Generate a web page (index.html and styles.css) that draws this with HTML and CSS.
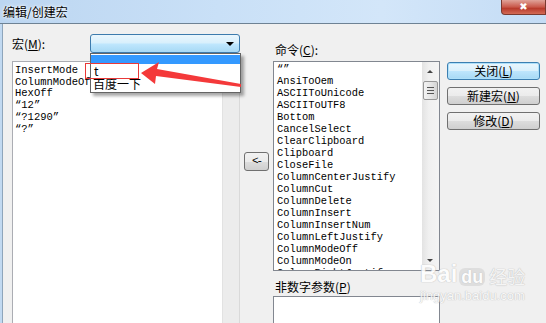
FILE: index.html
```html
<!DOCTYPE html>
<html lang="zh-CN">
<head>
	<meta charset="UTF-8">
	<title>编辑/创建宏</title>
	<link rel="stylesheet" href="styles.css">
</head>
<body>
<div class="titlebar">
	<span class="title">编辑/创建宏</span>
	<span class="close-btn">&#10006;</span>
</div>
<div class="dialog">
	<div class="col-left">
		<div class="macro-row">
			<span class="label">宏(<u>M</u>):</span>
			<div class="combo"><span class="combo-arrow"></span></div>
		</div>
		<div class="edit-box">
			<div class="edit-text">
				<div>InsertMode</div>
				<div>ColumnModeOff</div>
				<div>HexOff</div>
				<div>“12”</div>
				<div>“?1290”</div>
				<div>“?”</div>
			</div>
			<div class="edit-scroll"></div>
		</div>
	</div>
	<div class="col-mid">
		<div class="arrow-btn">&lt;-</div>
	</div>
	<div class="col-right">
		<div class="label">命令(<u>C</u>):</div>
		<div class="list-box">
			<ul class="cmd-list">
				<li>“”</li>
				<li>AnsiToOem</li>
				<li>ASCIIToUnicode</li>
				<li>ASCIIToUTF8</li>
				<li>Bottom</li>
				<li>CancelSelect</li>
				<li>ClearClipboard</li>
				<li>Clipboard</li>
				<li>CloseFile</li>
				<li>ColumnCenterJustify</li>
				<li>ColumnCut</li>
				<li>ColumnDelete</li>
				<li>ColumnInsert</li>
				<li>ColumnInsertNum</li>
				<li>ColumnLeftJustify</li>
				<li>ColumnModeOff</li>
				<li>ColumnModeOn</li>
				<li class="cut">ColumnRightJustify</li>
			</ul>
			<div class="vscroll">
				<span class="sb-up"></span>
				<span class="sb-thumb"></span>
				<span class="sb-down"></span>
			</div>
		</div>
		<div class="label label-param">非数字参数(<u>P</u>)</div>
		<div class="param-box"></div>
	</div>
	<div class="col-btns">
		<div class="btn btn-default">关闭(<u>L</u>)</div>
		<div class="btn">新建宏(<u>N</u>)</div>
		<div class="btn">修改(<u>D</u>)</div>
	</div>
</div>

<!-- 下拉列表 -->
<div class="dropdown">
	<div class="dd-item dd-sel"></div>
	<div class="dd-item">t</div>
	<div class="dd-item dd-cn">百度一下</div>
</div>

<!-- 标注 -->
<div class="mark-box"></div>
<svg class="mark-arrow" width="546" height="323" viewBox="0 0 546 323">
	<polygon points="141,73 159,62 157,69 241,84 241,87 156,76 155,84" fill="#f4393a"/>
</svg>

<!-- 水印 -->
<div class="watermark">
	<div class="wm-top"><span class="wm-bai">Bai</span><span class="wm-du">du</span><span class="wm-jy">经验</span></div>
	<div class="wm-url">jingyan.baidu.com</div>
</div>
</body>
</html>
```

FILE: styles.css
```css
body{
	margin: 0;
	width: 546px;
	height: 323px;
	overflow: hidden;
	position: relative;
	background: #f0f0f0;
	font-family: "Noto Sans CJK SC", "DejaVu Sans", sans-serif;
	font-size: 12px;
	color: #000;
}
ul,li{
	margin: 0;
	padding: 0;
	list-style: none;
}
u{
	text-decoration: underline;
}

.titlebar{
	height: 23px;
	background: linear-gradient(to right, #bcd6f1, #c9e0f7 40%, #d3e6f9 70%, #c4dcf5);
	border-bottom: 1px solid #6e8294;
	position: relative;
}
.title{
	display: block;
	padding-left: 3px;
	line-height: 23px;
	font-size: 12px;
	text-shadow: 0 0 4px #fff, 0 0 2px #fff;
}
.close-btn{
	position: absolute;
	right: 0;
	top: 0;
	width: 43px;
	height: 14px;
	border: 1px solid #7a3a30;
	border-top: none;
	border-radius: 0 0 0 4px;
	background: linear-gradient(#e0a399, #c9584a 50%, #b83b2c 60%, #d36a55);
	color: #fff;
	font-size: 10px;
	line-height: 13px;
	text-align: center;
	font-family: "DejaVu Sans", sans-serif;
}

.dialog{
	display: flex;
	height: 299px;
	padding-left: 12px;
	border-left: 2px solid #c1d9f1;
	box-sizing: border-box;
	box-shadow: inset 1px 0 0 #8ea5bb;
}
.col-left{
	width: 228px;
	margin-left: -2px;
	padding-top: 10px;
	display: flex;
	flex-direction: column;
}
.macro-row{
	display: flex;
	align-items: center;
	height: 19px;
}
.macro-row .label{
	width: 78px;
}
.label{
	font-size: 12px;
	line-height: 12px;
}
.combo{
	width: 149px;
	height: 17px;
	border: 1px solid #3d7bad;
	border-radius: 3px;
	background: linear-gradient(#eaf6fd, #d9f0fc 45%, #bee6fd 55%, #a7d9f5);
	position: relative;
}
.combo-arrow{
	position: absolute;
	right: 5px;
	top: 7px;
	border-left: 4px solid transparent;
	border-right: 4px solid transparent;
	border-top: 4px solid #000;
}
.edit-box{
	margin-top: 8px;
	flex: 1;
	display: flex;
	border: 1px solid #abadb3;
	border-right: 1px solid #d9d9d9;
	border-bottom: none;
	background: #fff;
}
.edit-text{
	flex: 1;
	padding: 3px 2px;
	font-family: "Liberation Mono", monospace;
	font-size: 10.5px;
	line-height: 11.7px;
	white-space: nowrap;
}
.edit-scroll{
	width: 16px;
	background: #ececec;
	border-left: 1px solid #e2e2e2;
}

.col-mid{
	width: 25px;
	margin-left: 4px;
	padding-top: 128px;
}
.arrow-btn{
	width: 23px;
	height: 17px;
	border: 1px solid #707070;
	border-radius: 3px;
	background: linear-gradient(#f2f2f2, #ebebeb 50%, #dddddd 51%, #cfcfcf);
	text-align: center;
	font-family: "Liberation Mono", monospace;
	font-size: 11px;
	line-height: 16px;
	letter-spacing: -2px;
}

.col-right{
	width: 167px;
	margin-left: 4px;
	padding-top: 20px;
	display: flex;
	flex-direction: column;
}
.col-right .label{
	padding-left: 2px;
}
.list-box{
	margin-top: 5px;
	height: 208px;
	border: 1px solid #828790;
	background: #fff;
	display: flex;
	overflow: hidden;
}
.cmd-list{
	flex: 1;
	padding: 1px 0 0 3px;
	font-family: "Liberation Mono", monospace;
	font-size: 10.4px;
	line-height: 12px;
	white-space: nowrap;
	overflow: hidden;
}
.cmd-list .cut{
	height: 5px;
	overflow: hidden;
}
.vscroll{
	width: 17px;
	background: linear-gradient(to right, #e3e3e3, #f0f0f0 40%, #f4f4f4);
	position: relative;
}
.sb-up,.sb-down{
	position: absolute;
	left: 5px;
	border-left: 3px solid transparent;
	border-right: 3px solid transparent;
}
.sb-up{
	top: 8px;
	border-bottom: 3px solid #444;
}
.sb-down{
	bottom: 8px;
	border-top: 3px solid #444;
}
.sb-thumb{
	position: absolute;
	left: 1px;
	top: 19px;
	width: 13px;
	height: 17px;
	border: 1px solid #979797;
	border-radius: 2px;
	background: linear-gradient(to right, #f3f3f3, #e6e6e6 50%, #d4d4d4);
}
.sb-thumb::after{
	content: "";
	position: absolute;
	left: 3px;
	top: 5px;
	width: 7px;
	height: 5px;
	border-top: 1px solid #555;
	border-bottom: 1px solid #555;
	background: linear-gradient(transparent 2px, #555 2px, #555 3px, transparent 3px);
}
.label-param{
	margin-top: 10px;
}
.param-box{
	margin-top: 3px;
	flex: 1;
	border: 1px solid #828790;
	border-bottom: none;
	background: #fff;
}

.col-btns{
	width: 93px;
	margin-left: 7px;
	padding-top: 38px;
	display: flex;
	flex-direction: column;
	gap: 7px;
}
.btn{
	height: 16px;
	border: 1px solid #707070;
	border-radius: 3px;
	background: linear-gradient(#f2f2f2, #ebebeb 50%, #dddddd 51%, #cfcfcf);
	text-align: center;
	line-height: 16px;
	font-size: 12px;
}
.btn-default{
	border-color: #3c7fb1;
	background: linear-gradient(#eaf6fd, #d9f0fc 50%, #bee6fd 51%, #a7d9f5);
	box-shadow: inset 0 0 0 1px #aee0fa;
}

.dropdown{
	position: absolute;
	left: 90px;
	top: 53px;
	width: 149px;
	border: 1px solid #646464;
	background: #fff;
	box-shadow: 3px 3px 3px rgba(0,0,0,0.35);
	padding: 1px 0;
}
.dd-item{
	height: 13px;
	line-height: 13px;
	padding-left: 3px;
	font-size: 12px;
}
.dd-sel{
	height: 9px;
	background: #3399ff;
}
.dd-cn{
	height: 14px;
	line-height: 14px;
	padding-left: 2px;
}

.mark-box{
	position: absolute;
	left: 85px;
	top: 63px;
	width: 52px;
	height: 14px;
	border: 1px solid #e83838;
}
.mark-arrow{
	position: absolute;
	left: 0;
	top: 0;
}

.watermark{
	position: absolute;
	left: 420px;
	top: 262px;
	color: #fff;
	opacity: 0.85;
	font-family: "Liberation Sans", sans-serif;
	text-shadow: 0 0 1px #bbb, 0 0 1px #bbb;
}
.wm-top{
	display: flex;
	align-items: flex-end;
}
.wm-bai{
	font-size: 24px;
	font-weight: bold;
	line-height: 24px;
}
.wm-du{
	margin-left: 2px;
	padding: 0 2px;
	font-size: 18px;
	font-weight: bold;
	line-height: 18px;
	border-radius: 6px;
	background: #dcdcdc;
	color: #fff;
}
.wm-jy{
	margin-left: 4px;
	font-family: "Noto Sans CJK SC", sans-serif;
	font-size: 18px;
	line-height: 20px;
	color: #f6f6f6;
}
.wm-url{
	margin-top: 2px;
	font-size: 13px;
	color: #fafafa;
}
```
